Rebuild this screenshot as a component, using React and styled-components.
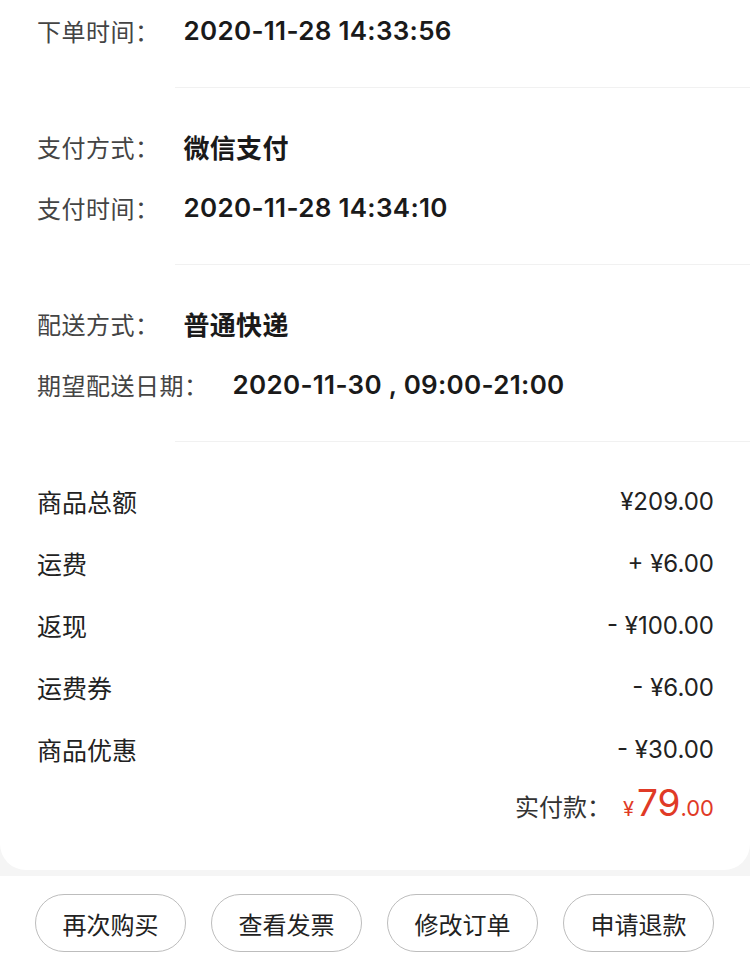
import React from 'react';
import styled, { createGlobalStyle } from 'styled-components';

const GlobalStyle = createGlobalStyle`
    html, body {
        margin: 0;
        padding: 0;
        background: #f5f5f5;
    }
    body {
        font-family: "Liberation Sans", "Noto Sans CJK SC", sans-serif;
        -webkit-font-smoothing: antialiased;
    }
`;

const infoGroups = [
    [{ label: '下单时间：', value: '2020-11-28 14:33:56' }],
    [
        { label: '支付方式：', value: '微信支付' },
        { label: '支付时间：', value: '2020-11-28 14:34:10' },
    ],
    [
        { label: '配送方式：', value: '普通快递' },
        { label: '期望配送日期：', value: '2020-11-30 , 09:00-21:00' },
    ],
];

const prices = [
    { label: '商品总额', value: '¥209.00' },
    { label: '运费', value: '+ ¥6.00' },
    { label: '返现', value: '- ¥100.00' },
    { label: '运费券', value: '- ¥6.00' },
    { label: '商品优惠', value: '- ¥30.00' },
];

const actions = ['再次购买', '查看发票', '修改订单', '申请退款'];

const App = () => {
    return (
        <Page>
            <GlobalStyle />
            <Card>
                {infoGroups.map((group, i) => (
                    <React.Fragment key={i}>
                        <Section>
                            {group.map((row) => (
                                <InfoRow key={row.label}>
                                    <Label>{row.label}</Label>
                                    <Value>{row.value}</Value>
                                </InfoRow>
                            ))}
                        </Section>
                        <Divider />
                    </React.Fragment>
                ))}
                <Section>
                    {prices.map((p) => (
                        <PriceRow key={p.label}>
                            <PriceLabel>{p.label}</PriceLabel>
                            <PriceValue>{p.value}</PriceValue>
                        </PriceRow>
                    ))}
                    <TotalRow>
                        <TotalLabel>实付款：</TotalLabel>
                        <Yen>¥</Yen>
                        <BigNum>79</BigNum>
                        <SmallNum>.00</SmallNum>
                    </TotalRow>
                </Section>
            </Card>
            <BottomBar>
                {actions.map((a) => (
                    <ActionButton key={a}>{a}</ActionButton>
                ))}
            </BottomBar>
        </Page>
    );
};

const numberFont = `"Inter", "Noto Sans CJK SC", sans-serif`;

const Page = styled.div`
    width: 750px;
    min-height: 968px;
    background: #f5f5f5;
    display: flex;
    flex-direction: column;
`;

const Card = styled.div`
    background: #fff;
    border-radius: 0 0 26px 26px;
    padding-bottom: 22px;
`;

const Section = styled.div`
    padding: 28px 36px 26px 37px;
    &:first-child {
        padding-top: 0;
    }
`;

const Divider = styled.div`
    height: 1px;
    margin-left: 175px;
    background: #f1f1f1;
`;

const InfoRow = styled.div`
    display: flex;
    align-items: center;
    height: 61px;
`;

const Label = styled.span`
    color: #444;
    font-size: 24px;
    letter-spacing: 0.5px;
    margin-right: 24px;
`;

const Value = styled.span`
    color: #1a1a1a;
    font-family: ${numberFont};
    font-size: 26px;
    font-weight: 600;
    letter-spacing: 0.3px;
`;

const PriceRow = styled.div`
    display: flex;
    align-items: center;
    justify-content: space-between;
    height: 62px;
`;

const PriceLabel = styled.span`
    color: #222;
    font-size: 25px;
`;

const PriceValue = styled.span`
    color: #222;
    font-family: ${numberFont};
    font-size: 24px;
    white-space: pre;
`;

const TotalRow = styled.div`
    display: flex;
    align-items: baseline;
    justify-content: flex-end;
    height: 42px;
    font-family: ${numberFont};
`;

const TotalLabel = styled.span`
    color: #333;
    font-family: "Liberation Sans", "Noto Sans CJK SC", sans-serif;
    font-size: 24px;
    margin-right: 12px;
`;

const Yen = styled.span`
    color: #e03a26;
    font-size: 20px;
    margin-right: 3px;
`;

const BigNum = styled.span`
    color: #e03a26;
    font-size: 37px;
`;

const SmallNum = styled.span`
    color: #e03a26;
    font-size: 22px;
`;

const BottomBar = styled.div`
    margin-top: 6px;
    flex: 1;
    background: #fff;
    display: flex;
    justify-content: space-between;
    padding: 18px 36px 0 35px;
`;

const ActionButton = styled.button`
    width: 151px;
    height: 58px;
    border: 1px solid #bdbdbd;
    border-radius: 29px;
    background: #fff;
    color: #222;
    font-family: "Liberation Sans", "Noto Sans CJK SC", sans-serif;
    font-size: 24px;
    padding: 0;
    cursor: pointer;
`;

export default App;
